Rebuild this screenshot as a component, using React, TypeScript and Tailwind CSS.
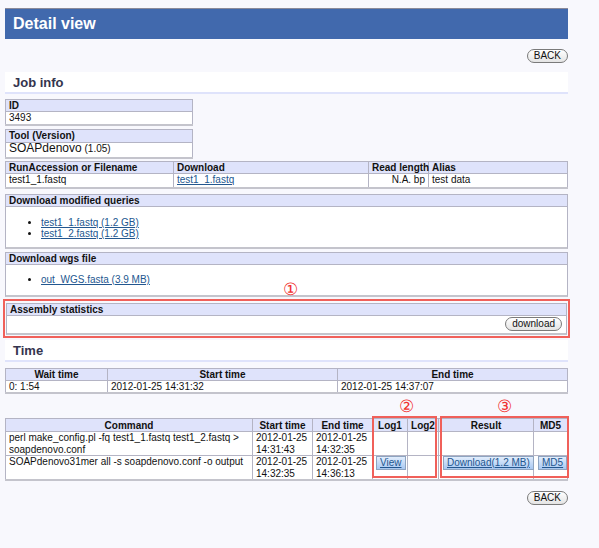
import React from 'react';

const th = 'border border-[#b4b4c4] bg-[#dfe3fb] px-[3px] h-[12px] leading-[11px] text-[10px] font-bold text-[#111] align-middle whitespace-nowrap';
const td = 'border border-[#b4b4c4] bg-white px-[3px] leading-[11.5px] text-[10px] align-top';

function PillButton({ label }: { label: string }) {
  return (
    <button className="h-[14px] rounded-full border border-[#7a7a7a] bg-gradient-to-b from-white to-[#e4e4e4] px-[6px] text-[10px] leading-[12px] text-[#111]">
      {label}
    </button>
  );
}

function BlueButton({ label }: { label: string }) {
  return (
    <span className="inline-block h-[14px] whitespace-nowrap border border-[#8ea4c0] bg-gradient-to-b from-[#e2edfc] to-[#a8c8f2] px-[3px] text-[10px] leading-[12px] text-[#23578f] underline">
      {label}
    </span>
  );
}

function SectionTitle({ title }: { title: string }) {
  return (
    <div className="h-[22px] border-b-2 border-[#dfe3fb] bg-white pl-[8px] text-[13px] font-bold leading-[21px] text-[#34344e]">
      {title}
    </div>
  );
}

function Box({ title, children }: { title: string; children: React.ReactNode }) {
  return (
    <div className="border border-b-2 border-[#b4b4c4] border-b-[#c4c4cc] bg-white">
      <div className="h-[12px] border-b border-[#b4b4c4] bg-[#dfe3fb] px-[3px] text-[10px] font-bold leading-[11px]">
        {title}
      </div>
      {children}
    </div>
  );
}

const link = 'text-[#23578f] underline';

export default function App() {
  return (
    <div className="min-h-[548px] bg-[#f8f8fd] font-['Liberation_Sans',Arial,sans-serif] text-[10px] text-[#111]">
      <div className="ml-[5px] w-[563px] pt-[8px]">
        <div className="flex h-[31px] items-center border-t border-[#8a8a9a] bg-[#4169ad] pl-[8px] text-[16px] font-bold text-white">
          Detail view
        </div>

        <div className="mt-[10px] flex justify-end">
          <PillButton label="BACK" />
        </div>

        <div className="mt-[9px]">
          <SectionTitle title="Job info" />
        </div>

        <table className="mt-[5px] w-[188px] border-collapse border-b-2 border-b-[#c4c4cc]">
          <tbody>
            <tr><th className={th + ' text-left'}>ID</th></tr>
            <tr><td className={td + ' h-[12px]'}>3493</td></tr>
          </tbody>
        </table>

        <table className="mt-[3px] w-[188px] border-collapse border-b-2 border-b-[#c4c4cc]">
          <tbody>
            <tr><th className={th + ' h-[13px] text-left'}>Tool (Version)</th></tr>
            <tr>
              <td className={td + ' h-[16px] align-middle'}>
                <span className="text-[12px]">SOAPdenovo</span> <span className="text-[10px]">(1.05)</span>
              </td>
            </tr>
          </tbody>
        </table>

        <table className="mt-[2px] w-full table-fixed border-collapse border-b-2 border-b-[#c4c4cc]">
          <colgroup>
            <col className="w-[168px]" />
            <col className="w-[195px]" />
            <col className="w-[60px]" />
            <col />
          </colgroup>
          <tbody>
            <tr>
              <th className={th + ' text-left'}>RunAccession or Filename</th>
              <th className={th + ' text-left'}>Download</th>
              <th className={th + ' text-left'}>Read length</th>
              <th className={th + ' text-left'}>Alias</th>
            </tr>
            <tr>
              <td className={td + ' h-[14px] align-middle'}>test1_1.fastq</td>
              <td className={td + ' align-middle'}><span className={link}>test1_1.fastq</span></td>
              <td className={td + ' text-right align-middle'}>N.A. bp</td>
              <td className={td + ' align-middle'}>test data</td>
            </tr>
          </tbody>
        </table>

        <div className="mt-[5px]">
          <Box title="Download modified queries">
            <ul className="h-[40px] list-disc pl-[35px] pt-[10px] leading-[11px]">
              <li><span className={link}>test1_1.fastq (1.2 GB)</span></li>
              <li><span className={link}>test1_2.fastq (1.2 GB)</span></li>
            </ul>
          </Box>
        </div>

        <div className="mt-[3px]">
          <Box title="Download wgs file">
            <ul className="h-[30px] list-disc pl-[35px] pt-[9px] leading-[11px]">
              <li><span className={link}>out_WGS.fasta (3.9 MB)</span></li>
            </ul>
          </Box>
        </div>

        <div className="relative -mx-[2px] mt-[2px] border-2 border-[#f0605a] px-[1px] pt-[2px] pb-[1px]">
          <span className="absolute -top-[21px] left-[278px] text-[17px] leading-[20px] text-[#f03030]">①</span>
          <Box title="Assembly statistics">
            <div className="flex h-[17px] items-center justify-end pr-[4px]">
              <PillButton label="download" />
            </div>
          </Box>
        </div>

        <div className="mt-[2px]">
          <SectionTitle title="Time" />
        </div>

        <table className="mt-[6px] w-full table-fixed border-collapse border-b-2 border-b-[#c4c4cc]">
          <colgroup>
            <col className="w-[102px]" />
            <col className="w-[230px]" />
            <col />
          </colgroup>
          <tbody>
            <tr>
              <th className={th + ' text-center'}>Wait time</th>
              <th className={th + ' text-center'}>Start time</th>
              <th className={th + ' text-center'}>End time</th>
            </tr>
            <tr>
              <td className={td + ' h-[13px] align-middle'}>0: 1:54</td>
              <td className={td + ' align-middle'}>2012-01-25 14:31:32</td>
              <td className={td + ' align-middle'}>2012-01-25 14:37:07</td>
            </tr>
          </tbody>
        </table>

        <div className="relative mt-[24px]">
          <table className="w-full table-fixed border-collapse border-b-2 border-b-[#c4c4cc]">
            <colgroup>
              <col className="w-[247px]" />
              <col className="w-[60px]" />
              <col className="w-[60px]" />
              <col className="w-[35px]" />
              <col className="w-[31px]" />
              <col className="w-[95px]" />
              <col />
            </colgroup>
            <tbody>
              <tr>
                <th className={th + ' h-[13px] text-center text-[10.5px]'}>Command</th>
                <th className={th + ' text-center text-[10.5px]'}>Start time</th>
                <th className={th + ' text-center text-[10.5px]'}>End time</th>
                <th className={th + ' text-center text-[10.5px]'}>Log1</th>
                <th className={th + ' text-center text-[10.5px]'}>Log2</th>
                <th className={th + ' text-center text-[10.5px]'}>Result</th>
                <th className={th + ' text-center text-[10.5px]'}>MD5</th>
              </tr>
              <tr>
                <td className={td + ' h-[22px] text-[10.5px]'}>
                  perl make_config.pl -fq test1_1.fastq test1_2.fastq &gt;<br />soapdenovo.conf
                </td>
                <td className={td + ' text-[10.5px]'}>2012-01-25<br />14:31:43</td>
                <td className={td + ' text-[10.5px]'}>2012-01-25<br />14:32:35</td>
                <td className={td}></td>
                <td className={td}></td>
                <td className={td}></td>
                <td className={td}></td>
              </tr>
              <tr>
                <td className={td + ' h-[22px] text-[10.5px]'}>SOAPdenovo31mer all -s soapdenovo.conf -o output</td>
                <td className={td + ' text-[10.5px]'}>2012-01-25<br />14:32:35</td>
                <td className={td + ' text-[10.5px]'}>2012-01-25<br />14:36:13</td>
                <td className={td + ' align-middle'}><BlueButton label="View" /></td>
                <td className={td}></td>
                <td className={td + ' px-[4px] align-middle'}><BlueButton label="Download(1.2 MB)" /></td>
                <td className={td + ' px-[4px] align-middle'}><BlueButton label="MD5" /></td>
              </tr>
            </tbody>
          </table>
          <div className="pointer-events-none absolute -top-[2px] left-[367px] h-[62px] w-[65px] border-2 border-[#f0605a]" />
          <div className="pointer-events-none absolute -top-[2px] left-[435px] h-[62px] w-[129px] border-2 border-[#f0605a]" />
          <span className="absolute -top-[21px] left-[394px] text-[17px] leading-[20px] text-[#f03030]">②</span>
          <span className="absolute -top-[21px] left-[492px] text-[17px] leading-[20px] text-[#f03030]">③</span>
        </div>

        <div className="mt-[10px] flex justify-end">
          <PillButton label="BACK" />
        </div>
      </div>
    </div>
  );
}
